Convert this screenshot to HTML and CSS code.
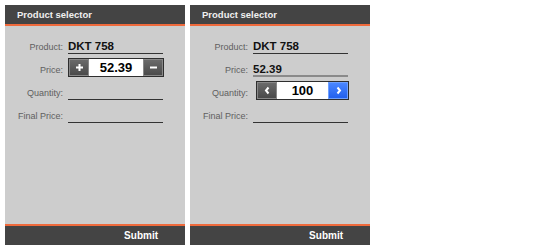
FILE: index.html
```html
<!DOCTYPE html>
<html lang="en">
<head>
    <meta charset="UTF-8">
    <meta name="viewport" content="width=device-width, initial-scale=1.0">
    <title>Product selector</title>
    <link rel="stylesheet" href="styles.css">
</head>
<body>
<div class="screens">

    <div class="phone">
        <div class="titlebar">Product selector</div>
        <div class="form">
            <div class="row">
                <div class="label">Product:</div>
                <div class="field">DKT 758</div>
            </div>
            <div class="row">
                <div class="label">Price:</div>
                <div class="stepper">
                    <div class="step-btn">
                        <svg width="9" height="9" viewBox="0 0 9 9"><path d="M3.5 1h2v2.5H8v2H5.5V8h-2V5.5H1v-2h2.5z" fill="#fff"/></svg>
                    </div>
                    <div class="step-value">52.39</div>
                    <div class="step-btn">
                        <svg width="9" height="9" viewBox="0 0 9 9"><path d="M1 3.5h7v2H1z" fill="#fff"/></svg>
                    </div>
                </div>
            </div>
            <div class="row">
                <div class="label">Quantity:</div>
                <div class="field"></div>
            </div>
            <div class="row">
                <div class="label">Final Price:</div>
                <div class="field"></div>
            </div>
        </div>
        <div class="softkeys">Submit</div>
    </div>

    <div class="phone">
        <div class="titlebar">Product selector</div>
        <div class="form">
            <div class="row">
                <div class="label">Product:</div>
                <div class="field">DKT 758</div>
            </div>
            <div class="row">
                <div class="label">Price:</div>
                <div class="field light">52.39</div>
            </div>
            <div class="row">
                <div class="label">Quantity:</div>
                <div class="stepper shifted">
                    <div class="step-btn">
                        <svg width="9" height="9" viewBox="0 0 9 9"><path d="M5.5 1.5L3 4.5l2.5 3" stroke="#fff" stroke-width="2" fill="none"/></svg>
                    </div>
                    <div class="step-value">100</div>
                    <div class="step-btn active">
                        <svg width="9" height="9" viewBox="0 0 9 9"><path d="M3.5 1.5L6 4.5l-2.5 3" stroke="#fff" stroke-width="2" fill="none"/></svg>
                    </div>
                </div>
            </div>
            <div class="row">
                <div class="label">Final Price:</div>
                <div class="field"></div>
            </div>
        </div>
        <div class="softkeys">Submit</div>
    </div>

</div>
</body>
</html>
```

FILE: styles.css
```css
html, body {
    margin: 0;
    background: #fff;
    font-family: "Liberation Sans", Arial, sans-serif;
}

.screens {
    display: flex;
    gap: 5px;
    padding: 5px;
}

.phone {
    width: 180px;
    height: 240px;
    display: flex;
    flex-direction: column;
    background-color: #cdcdcd;
}

.titlebar {
    height: 19px;
    line-height: 19px;
    padding-left: 12px;
    background-color: #444;
    border-bottom: 2px solid #ef6a3c;
    color: #f0f0f0;
    font-size: 9.5px;
    font-weight: bold;
}

.form {
    flex: 1;
    padding-top: 5px;
}

.row {
    display: flex;
    align-items: flex-end;
    height: 23px;
}

.label {
    width: 58px;
    text-align: right;
    font-size: 9px;
    line-height: 10px;
    padding-bottom: 2px;
    color: #606060;
}

.field {
    width: 95px;
    margin-left: 5px;
    height: 14px;
    line-height: 14px;
    border-bottom: 1px solid #333;
    font-size: 11.5px;
    font-weight: bold;
    color: #111;
}

.field.light {
    border-bottom: 2px solid #8a8a8a;
    height: 13px;
}

.stepper {
    display: flex;
    width: 96px;
    height: 19px;
    margin-left: 5px;
    box-sizing: border-box;
    border: 1px solid #2e2e2e;
    background: #fff;
}

.stepper.shifted {
    margin-left: 8px;
    width: 93px;
}

.step-btn {
    width: 20px;
    display: flex;
    align-items: center;
    justify-content: center;
    background: linear-gradient(#6a6a6a, #4a4a4a);
    border: 1px solid #888;
    box-sizing: border-box;
}

.step-btn.active {
    background: linear-gradient(#4a86ff, #2261ee);
    border-color: #6ea0ff;
}

.step-value {
    flex: 1;
    text-align: center;
    font-size: 13px;
    font-weight: bold;
    line-height: 17px;
    color: #000;
    background: #fff;
}

.softkeys {
    height: 19px;
    line-height: 19px;
    padding-right: 27px;
    text-align: right;
    background-color: #444;
    border-top: 2px solid #ef6a3c;
    color: #fff;
    font-size: 10px;
    font-weight: bold;
}
```
